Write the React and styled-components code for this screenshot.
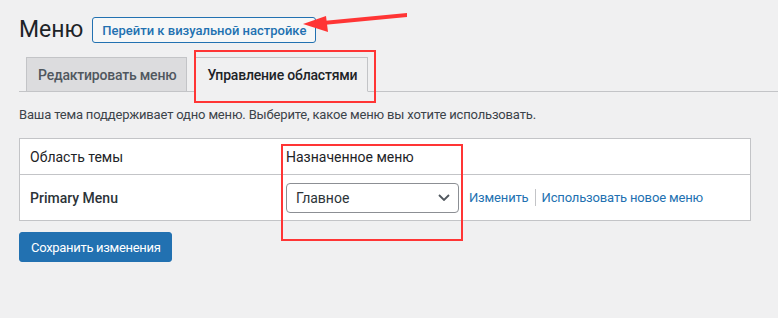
import styled, { createGlobalStyle } from 'styled-components';

const GlobalStyle = createGlobalStyle`
  body {
    margin: 0;
    background: #f0f0f1;
    font-family: Roboto, "Open Sans", sans-serif;
    color: #3c434a;
  }
`;

export default function App() {
  return (
    <Page>
      <GlobalStyle />
      <Wrap>
        <Header>
          <Title>Меню</Title>
          <ActionButton href="#">Перейти к визуальной настройке</ActionButton>
        </Header>

        <TabBar>
          <Tab href="#">Редактировать меню</Tab>
          <Tab href="#" $active>Управление областями</Tab>
        </TabBar>

        <Description>
          Ваша тема поддерживает одно меню. Выберите, какое меню вы хотите использовать.
        </Description>

        <LocationsTable>
          <thead>
            <tr>
              <HeadCell>Область темы</HeadCell>
              <HeadCell>Назначенное меню</HeadCell>
            </tr>
          </thead>
          <tbody>
            <tr>
              <LocationName>Primary Menu</LocationName>
              <Cell>
                <MenuPicker>
                  <SelectBox>
                    <span>Главное</span>
                    <svg width="12" height="7" viewBox="0 0 12 7">
                      <polyline points="1,1 6,6 11,1" fill="none" stroke="#50575e" strokeWidth="1.8" />
                    </svg>
                  </SelectBox>
                  <Actions>
                    <ActionLink href="#">Изменить</ActionLink>
                    <Divider />
                    <ActionLink href="#">Использовать новое меню</ActionLink>
                  </Actions>
                </MenuPicker>
              </Cell>
            </tr>
          </tbody>
        </LocationsTable>

        <SaveButton>Сохранить изменения</SaveButton>
      </Wrap>

      <Annotation style={{ left: 194, top: 50, width: 182, height: 53 }} />
      <Annotation style={{ left: 281, top: 144, width: 182, height: 97 }} />
      <Arrow width="110" height="34" viewBox="0 0 110 34">
        <path d="M20 17 L104 9 L104 13 L20 21 Z" fill="#ff3535" />
        <polygon points="0,20 23,12 25,28" fill="#ff3535" />
      </Arrow>
    </Page>
  );
}

const Page = styled.div`
  position: relative;
  width: 778px;
  height: 318px;
  overflow: hidden;
`;

const Wrap = styled.div`
  padding: 14px 0 0 19px;
`;

const Header = styled.div`
  display: flex;
  align-items: center;
  height: 32px;
`;

const Title = styled.h1`
  margin: 0;
  font-size: 23px;
  font-weight: 400;
  line-height: 1.3;
  color: #1d2327;
`;

const ActionButton = styled.a`
  margin-left: 9px;
  box-sizing: border-box;
  height: 26px;
  display: inline-flex;
  align-items: center;
  padding: 0 9px;
  border: 1px solid #2271b1;
  border-radius: 3px;
  background: #f6f7f7;
  color: #2271b1;
  font-size: 13px;
  font-weight: 500;
  text-decoration: none;
`;

const TabBar = styled.nav`
  display: flex;
  gap: 8px;
  margin-top: 11px;
  padding-left: 7px;
  border-bottom: 1px solid #c3c4c7;
`;

const Tab = styled.a`
  box-sizing: border-box;
  height: 35px;
  margin-bottom: -1px;
  padding: 0 10px 0 11px;
  display: flex;
  align-items: center;
  border: 1px solid #c3c4c7;
  border-bottom-color: ${({ $active }) => ($active ? '#f0f0f1' : '#c3c4c7')};
  background: ${({ $active }) => ($active ? '#f0f0f1' : '#dcdcde')};
  color: ${({ $active }) => ($active ? '#1d2327' : '#50575e')};
  font-size: 14px;
  font-weight: 500;
  letter-spacing: -0.2px;
  text-decoration: none;
`;

const Description = styled.p`
  margin: 13px 0 0;
  font-size: 13px;
  line-height: 20px;
  letter-spacing: -0.17px;
  color: #3c434a;
`;

const LocationsTable = styled.table`
  margin-top: 13px;
  width: 732px;
  border: 1px solid #c3c4c7;
  border-spacing: 0;
  background: #fff;
  font-size: 14px;
`;

const HeadCell = styled.th`
  height: 35px;
  padding: 0 10px;
  text-align: left;
  font-weight: 400;
  color: #1d2327;
  border-bottom: 1px solid #c3c4c7;

  &:first-child {
    width: 236px;
  }
`;

const Cell = styled.td`
  height: 45px;
  padding: 0 10px;
`;

const LocationName = styled(Cell)`
  font-weight: 500;
  color: #2c3338;
`;

const MenuPicker = styled.div`
  display: flex;
  align-items: center;
`;

const SelectBox = styled.div`
  box-sizing: border-box;
  width: 173px;
  height: 30px;
  padding: 0 8px 0 9px;
  display: flex;
  align-items: center;
  justify-content: space-between;
  border: 1px solid #8c8f94;
  border-radius: 4px;
  background: #fff;
  color: #2c3338;
  font-size: 14px;
`;

const Actions = styled.div`
  display: flex;
  align-items: center;
  gap: 6px;
  margin-left: 10px;
`;

const ActionLink = styled.a`
  color: #2271b1;
  font-size: 13px;
  letter-spacing: -0.15px;
  text-decoration: none;
`;

const Divider = styled.span`
  width: 1px;
  height: 17px;
  background: #c3c4c7;
`;

const SaveButton = styled.button`
  margin-top: 11px;
  height: 30px;
  padding: 0 10px 0 11px;
  border: 1px solid #2271b1;
  border-radius: 3px;
  background: #2271b1;
  color: #fff;
  font-family: inherit;
  font-size: 13px;
  letter-spacing: -0.3px;
`;

const Annotation = styled.div`
  position: absolute;
  box-sizing: border-box;
  border: 2px solid #ff3535;
  pointer-events: none;
`;

const Arrow = styled.svg`
  position: absolute;
  left: 303px;
  top: 4px;
  pointer-events: none;
`;
